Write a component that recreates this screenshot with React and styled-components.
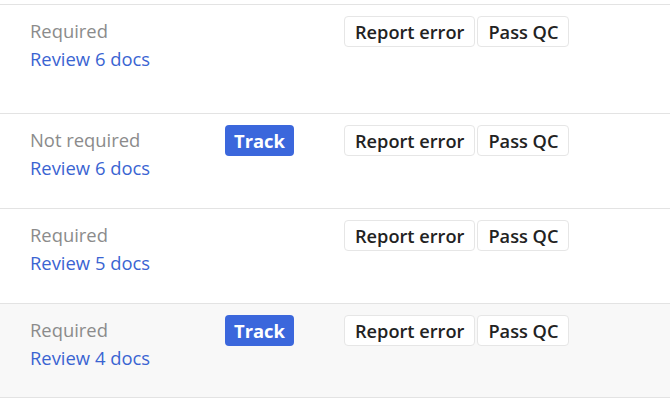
import styled, { createGlobalStyle } from "styled-components";

const GlobalStyle = createGlobalStyle`
  * { box-sizing: border-box; }
  body {
    margin: 0;
    background: #fff;
    font-family: "Open Sans", "Noto Sans", sans-serif;
  }
`;

const List = styled.div`
  padding-top: 4px;
`;

const Row = styled.div`
  display: grid;
  grid-template-columns: 195px 119px auto;
  align-items: start;
  height: ${(p) => p.$height}px;
  padding: 11px 0 0 30px;
  border-top: 1px solid #e3e3e3;
  background: ${(p) => (p.$shaded ? "#f8f8f8" : "#fff")};

  &:last-child {
    border-bottom: 1px solid #e3e3e3;
  }
`;

const Info = styled.div`
  display: flex;
  flex-direction: column;
  padding-top: 1px;
  font-size: 18.4px;
  line-height: 28px;
`;

const Status = styled.span`
  color: #8b8b8b;
`;

const DocsLink = styled.a`
  color: #3a64d2;
  text-decoration: none;
  cursor: pointer;
`;

const TrackButton = styled.button`
  height: 31px;
  padding: 0 9px;
  border: none;
  border-radius: 4px;
  background: #3b67dc;
  color: #fff;
  font-family: inherit;
  font-size: 18.4px;
  font-weight: 700;
  justify-self: start;
  cursor: pointer;
`;

const Actions = styled.div`
  display: flex;
  gap: 2px;
`;

const ActionButton = styled.button`
  height: 31px;
  padding: 0 10px;
  border: 1px solid #e6e6e6;
  border-radius: 4px;
  background: #fff;
  color: #222;
  font-family: inherit;
  font-size: 18.2px;
  font-weight: 600;
  cursor: pointer;
`;

const rows = [
  { status: "Required", docs: 6, track: false, height: 109 },
  { status: "Not required", docs: 6, track: true, height: 95 },
  { status: "Required", docs: 5, track: false, height: 95 },
  { status: "Required", docs: 4, track: true, height: 95, shaded: true },
];

export default function App() {
  return (
    <>
      <GlobalStyle />
      <List>
        {rows.map((r, i) => (
          <Row key={i} $height={r.height} $shaded={r.shaded}>
            <Info>
              <Status>{r.status}</Status>
              <DocsLink>Review {r.docs} docs</DocsLink>
            </Info>
            <div>{r.track && <TrackButton>Track</TrackButton>}</div>
            <Actions>
              <ActionButton>Report error</ActionButton>
              <ActionButton>Pass QC</ActionButton>
            </Actions>
          </Row>
        ))}
      </List>
    </>
  );
}
